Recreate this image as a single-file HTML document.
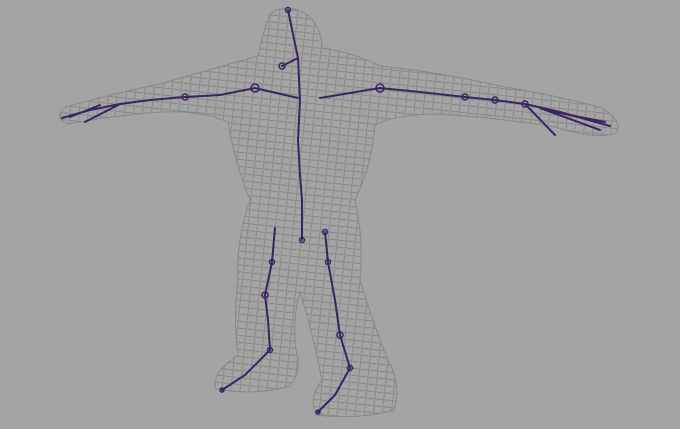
<!DOCTYPE html>
<html><head><style>
html,body{margin:0;padding:0;background:#a4a4a4;}
svg{display:block}
</style></head><body>
<svg width="680" height="429" viewBox="0 0 680 429" xmlns="http://www.w3.org/2000/svg">
<defs>
<pattern id="m" width="9" height="7" patternUnits="userSpaceOnUse" patternTransform="rotate(6)">
<path d="M0 0Q4 1 9 0M0 0Q1 3 0 7" stroke="#838383" stroke-width="0.9" fill="none"/>
</pattern>
</defs>
<rect width="680" height="429" fill="#a4a4a4"/>
<g fill="url(#m)" stroke="#888" stroke-width="1">
<path d="M270 14 Q286 2 306 14 Q322 26 322 48 Q352 52 380 66 Q440 72 500 86 Q560 96 602 108 Q624 122 616 133 Q595 140 555 127 Q500 118 440 114 Q395 114 375 125 Q372 165 355 200 Q364 240 360 280 Q372 320 388 360 Q402 385 394 410 Q360 420 316 415 Q308 400 322 380 Q312 330 300 292 Q292 320 296 350 Q302 372 290 386 Q255 396 216 389 Q210 374 238 355 Q233 320 238 280 Q236 240 250 200 Q234 160 228 122 Q200 110 160 112 Q110 116 68 124 Q52 118 66 107 Q110 94 160 84 Q215 68 258 56 Q264 28 270 14 Z"/>
</g>
<g stroke="#3a2460" stroke-width="2" fill="none" stroke-linecap="round">
<path d="M288 10 L298 58 L282 66 M298 58 L300 100 L298 140 L300 175 L302 200 L302 240"/>
<path d="M298 98 L255 88 L220 95 L185 97 L150 100 L120 104 L90 110 L62 118 M120 104 L85 122 M100 105 L70 117"/>
<path d="M320 98 L380 88 L420 92 L465 97 L495 100 L525 104 L560 112 L610 126 M525 104 L555 135 M540 108 L600 130 M545 110 L605 122"/>
<path d="M275 228 L272 262 L265 295 L268 320 L270 350 L245 375 L222 390"/>
<path d="M325 232 L328 262 L335 300 L340 335 L350 368 L335 395 L318 412"/>
</g>
<g fill="none" stroke="#3a2460" stroke-width="1.5">
<circle cx="288" cy="10" r="2.5"/><circle cx="282" cy="66" r="3"/><circle cx="255" cy="88" r="4"/><circle cx="185" cy="97" r="3"/><circle cx="380" cy="88" r="4"/><circle cx="465" cy="97" r="3"/><circle cx="495" cy="100" r="3"/><circle cx="525" cy="104" r="3"/><circle cx="302" cy="240" r="2.5"/><circle cx="272" cy="262" r="2.5"/><circle cx="265" cy="295" r="3"/><circle cx="270" cy="350" r="2.5"/><circle cx="325" cy="232" r="2.5"/><circle cx="328" cy="262" r="2.5"/><circle cx="340" cy="335" r="3"/><circle cx="350" cy="368" r="2.5"/><circle cx="222" cy="390" r="2"/><circle cx="318" cy="412" r="2"/>
</g>
</svg>
</body></html>
